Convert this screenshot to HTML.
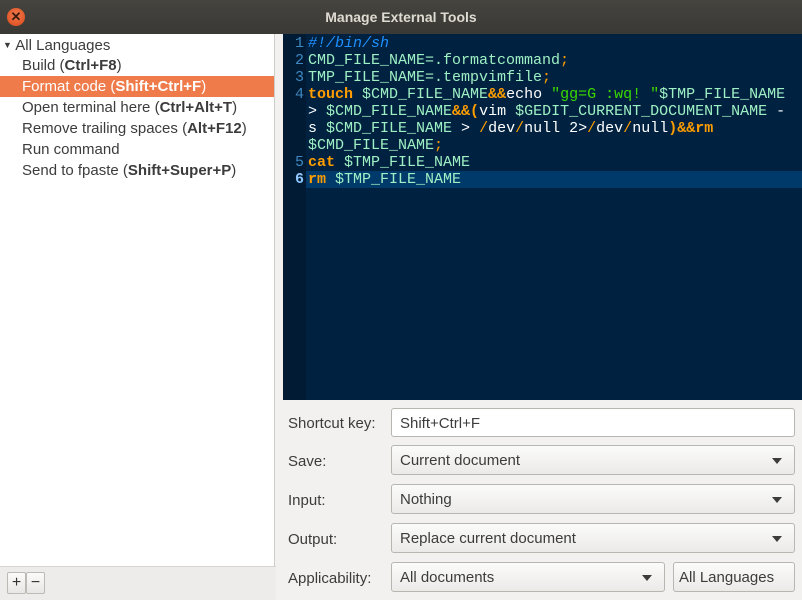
<!DOCTYPE html>
<html><head><style>
*{margin:0;padding:0;box-sizing:border-box}
body{width:802px;height:600px;overflow:hidden;background:#f2f1f0;font-family:"Liberation Sans",sans-serif;position:relative}
#title{position:absolute;left:0;top:0;width:802px;height:34px;background:linear-gradient(#45443f,#3a3935);color:#dfdbd2;font-weight:bold;font-size:14px;text-align:center;line-height:34px}
#close{position:absolute;left:7px;top:8px;width:18px;height:18px;border-radius:50%;background:radial-gradient(circle at 50% 40%,#f37b4c,#d9471a);color:#3a1a10;font-size:13px;line-height:18px;text-align:center;font-weight:bold}
#left{position:absolute;left:0;top:34px;width:275px;height:532px;background:#fff;border-right:1px solid #cfcdc9;font-size:15px;color:#3c3c3c}
.row{height:21px;line-height:22px;padding-left:22px;white-space:nowrap}
.sel{background:#ef7a4a;color:#fff}
#lbot{position:absolute;left:0;top:566px;width:276px;height:34px;background:#edecea;border-top:1px solid #d6d4d0}
.btn{position:absolute;top:5px;width:19px;height:22px;border:1px solid #bcbab5;background:linear-gradient(#fbfbfa,#e8e7e5);border-radius:2px;text-align:center;line-height:20px;font-size:16px;color:#333}
#ed{position:absolute;left:283px;top:34px;width:519px;height:366px;background:#002240;font-family:"Liberation Mono",monospace;font-size:15px;letter-spacing:0px;line-height:17px;color:#9ef0c4}
#gut{position:absolute;left:0;top:0;width:23px;height:366px;background:#001b33}
.l{position:absolute;left:0;width:519px;height:17px;white-space:pre}
.n{display:inline-block;width:21px;text-align:right;color:#3e88c2;margin-right:4px}
.c{color:#1d8fff;font-style:italic}.k{color:#ff9d00;font-weight:bold}.o{color:#ff9d00}.s{color:#3ad900}.w{color:#fff}
#form{position:absolute;left:276px;top:400px;width:526px;height:200px;font-size:15px;color:#3c3c3c}
.lab{position:absolute;left:12px}
.box{position:absolute;left:115px;width:404px;height:30px;border:1px solid #b8b6b1;border-radius:3px;background:linear-gradient(#fbfbfa,#ebeae8);padding-left:8px;line-height:30px}
.box.t{background:#fff}
.arr{position:absolute;right:12px;top:12px;width:0;height:0;border-left:5px solid transparent;border-right:5px solid transparent;border-top:6px solid #3c3c3c}
</style></head><body>
<div id="title"><div id="close">✕</div>Manage External Tools</div>
<div id="left">
<div class="row" style="padding-left:3px"><span style="font-size:9px;vertical-align:2px">▼</span> All Languages</div>
<div class="row">Build (<b>Ctrl+F8</b>)</div>
<div class="row sel">Format code (<b>Shift+Ctrl+F</b>)</div>
<div class="row">Open terminal here (<b>Ctrl+Alt+T</b>)</div>
<div class="row">Remove trailing spaces (<b>Alt+F12</b>)</div>
<div class="row">Run command</div>
<div class="row">Send to fpaste (<b>Shift+Super+P</b>)</div>
</div>
<div id="lbot"><div class="btn" style="left:7px">+</div><div class="btn" style="left:26px">−</div></div>
<div id="ed"><div id="gut"></div>
<div class="l" style="top:1px"><span class="n">1</span><span class="c">#!/bin/sh</span></div>
<div class="l" style="top:18px"><span class="n">2</span>CMD_FILE_NAME=.formatcommand<span class="o">;</span></div>
<div class="l" style="top:35px"><span class="n">3</span>TMP_FILE_NAME=.tempvimfile<span class="o">;</span></div>
<div class="l" style="top:52px"><span class="n">4</span><span class="k">touch</span> $CMD_FILE_NAME<span class="k">&amp;&amp;</span><span class="w">echo</span> <span class="s">"gg=G :wq! "</span>$TMP_FILE_NAME</div>
<div class="l" style="top:69px"><span class="n"> </span><span class="w">&gt;</span> $CMD_FILE_NAME<span class="k">&amp;&amp;(</span><span class="w">vim</span> $GEDIT_CURRENT_DOCUMENT_NAME <span class="w">-</span></div>
<div class="l" style="top:86px"><span class="n"> </span><span class="w">s</span> $CMD_FILE_NAME <span class="w">&gt;</span> <span class="o">/</span><span class="w">dev</span><span class="o">/</span><span class="w">null 2&gt;</span><span class="o">/</span><span class="w">dev</span><span class="o">/</span><span class="w">null</span><span class="k">)&amp;&amp;rm</span></div>
<div class="l" style="top:103px"><span class="n"> </span>$CMD_FILE_NAME<span class="o">;</span></div>
<div class="l" style="top:120px"><span class="n">5</span><span class="k">cat</span> $TMP_FILE_NAME</div>
<div class="l" style="top:137px;background:linear-gradient(90deg,#001b33 23px,#003a6b 23px)"><span class="n" style="color:#8fc8ff;font-weight:bold">6</span><span class="k">rm</span> $TMP_FILE_NAME</div>
</div>
<div id="form">
<div class="lab" style="top:15px">Shortcut key:</div><div class="box t" style="top:8px;height:29px;line-height:29px">Shift+Ctrl+F</div>
<div class="lab" style="top:53px">Save:</div><div class="box" style="top:45px">Current document<div class="arr"></div></div>
<div class="lab" style="top:92px">Input:</div><div class="box" style="top:84px">Nothing<div class="arr"></div></div>
<div class="lab" style="top:131px">Output:</div><div class="box" style="top:123px">Replace current document<div class="arr"></div></div>
<div class="lab" style="top:170px">Applicability:</div><div class="box" style="top:162px;width:274px">All documents<div class="arr"></div></div>
<div class="box" style="top:162px;left:397px;width:122px;padding-left:5px">All Languages</div>
</div>
</body></html>
